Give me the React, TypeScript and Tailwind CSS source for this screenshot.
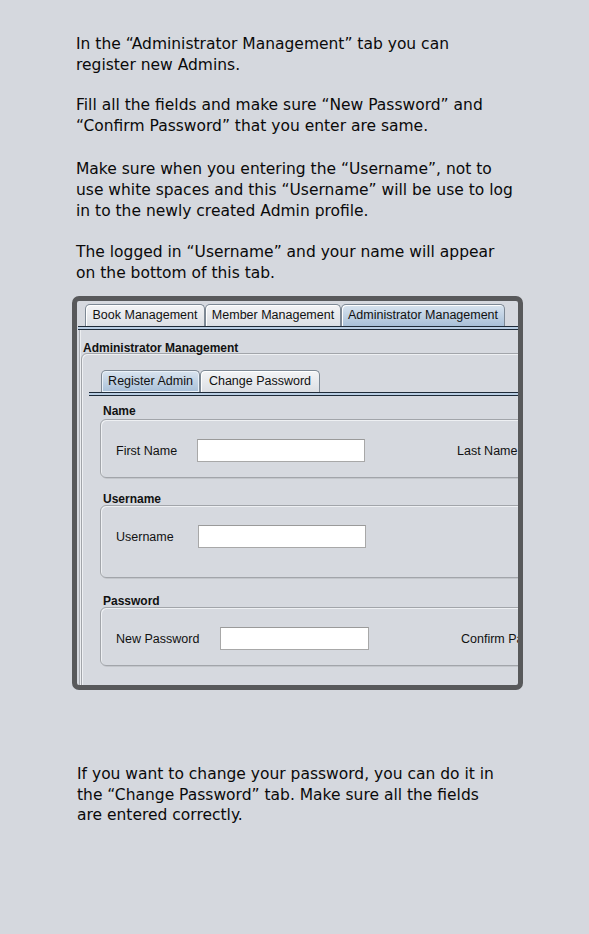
import React from "react";

const body = { fontFamily: '"DejaVu Sans", sans-serif' };
const ui = { fontFamily: '"Liberation Sans", Arial, sans-serif' };

function Tab({ label, selected, w }: { label: string; selected?: boolean; w: number }) {
  return (
    <div
      style={{ width: w }}
      className={
        "h-[22px] flex items-center justify-center border border-b-0 border-[#7d8894] rounded-t-[5px] text-[12.5px] text-[#111] whitespace-nowrap shadow-[inset_1px_1px_0_#ffffff] " +
        (selected
          ? "bg-gradient-to-b from-[#d9e4ef] to-[#a9c0d8]"
          : "bg-gradient-to-b from-[#f3f4f6] to-[#dcdfe4]")
      }
    >
      {label}
    </div>
  );
}

function TabLine() {
  return (
    <div className="flex flex-col">
      <div className="h-px bg-[#1e2a38]" />
      <div className="h-[2px] bg-[#b9cde2]" />
      <div className="h-px bg-[#1e2a38]" />
    </div>
  );
}

function Input({ w }: { w: number }) {
  return <div style={{ width: w }} className="h-[23px] bg-white border border-[#a8a8a8] border-t-[#9a9a9a]" />;
}

function Group({ h, children }: { h: number; children: React.ReactNode }) {
  return (
    <div
      style={{ height: h }}
      className="w-[560px] rounded-[6px] border border-[#a2a5aa] shadow-[inset_1px_1px_0_#eef0f3,1px_1px_0_#c3c6cb] flex items-start pt-[19px]"
    >
      {children}
    </div>
  );
}

export default function App() {
  return (
    <div className="w-[589px] min-h-[934px] bg-[#d5d8de] text-[#111] overflow-hidden">
      <div style={body} className="pt-[34px] pl-[76px] text-[15.5px] leading-[21px] whitespace-nowrap text-[#0a0a0a]">
        <p>
          In the “Administrator Management” tab you can
          <br />
          register new Admins.
        </p>
        <p className="mt-[19px]">
          Fill all the fields and make sure “New Password” and
          <br />
          “Confirm Password” that you enter are same.
        </p>
        <p className="mt-[22px]">
          Make sure when you entering the “Username”, not to
          <br />
          use white spaces and this “Username” will be use to log
          <br />
          in to the newly created Admin profile.
        </p>
        <p className="mt-[20px]">
          The logged in “Username” and your name will appear
          <br />
          on the bottom of this tab.
        </p>
      </div>

      <div
        style={ui}
        className="ml-[72px] mt-[12px] w-[451px] h-[394px] border-[5px] border-[#58595b] rounded-[7px] overflow-hidden bg-[#d6d9df]"
      >
        <div className="pt-[3px] pl-[8px] flex">
          <Tab label="Book Management" w={120} />
          <Tab label="Member Management" w={136} />
          <Tab label="Administrator Management" selected w={164} />
        </div>
        <div className="ml-[1px]">
          <TabLine />
        </div>
        <div className="ml-[2px] h-[400px] border-l border-[#a9acb2] shadow-[inset_1px_0_0_#eceef1]">
          <div className="pl-[3px] pt-[11px] text-[12px] font-bold leading-[14px]">Administrator Management</div>
          <div className="-mt-[2px] ml-[1px] w-[600px] h-[400px] rounded-[6px] border border-[#a2a5aa] shadow-[inset_1px_1px_0_#eef0f3]">
            <div className="pt-[16px] pl-[19px] flex">
              <div className="h-[22px] w-[99px] flex items-center justify-center border border-b-0 border-[#7d8894] rounded-t-[5px] text-[12.5px] whitespace-nowrap bg-gradient-to-b from-[#d9e4ef] to-[#a9c0d8] shadow-[inset_0_0_0_1px_#eaf1f8]">
                Register Admin
              </div>
              <Tab label="Change Password" w={120} />
            </div>
            <div className="ml-[7px]">
              <TabLine />
            </div>
            <div className="pl-[18px]">
              <div className="pl-[3px] pt-[8px] text-[12px] font-bold leading-[14px]">Name</div>
              <div className="mt-[1px]">
                <Group h={59}>
                  <div className="pl-[15px] w-[96px] text-[12.5px] leading-[24px]">First Name</div>
                  <Input w={168} />
                  <div className="ml-[92px] text-[12.5px] leading-[24px] whitespace-nowrap">Last Name</div>
                </Group>
              </div>
              <div className="pl-[3px] pt-[14px] text-[12px] font-bold leading-[14px]">Username</div>
              <div className="-mt-[1px]">
                <Group h={73}>
                  <div className="pl-[15px] w-[97px] text-[12.5px] leading-[24px]">Username</div>
                  <Input w={168} />
                </Group>
              </div>
              <div className="pl-[3px] pt-[16px] text-[12px] font-bold leading-[14px]">Password</div>
              <div className="-mt-[1px]">
                <Group h={59}>
                  <div className="pl-[15px] w-[119px] text-[12.5px] leading-[24px] whitespace-nowrap">New Password</div>
                  <Input w={149} />
                  <div className="ml-[92px] text-[12.5px] leading-[24px] whitespace-nowrap">Confirm Password</div>
                </Group>
              </div>
            </div>
          </div>
        </div>
      </div>

      <div style={body} className="pl-[77px] mt-[74px] text-[15.5px] leading-[20.5px] whitespace-nowrap text-[#0a0a0a]">
        If you want to change your password, you can do it in
        <br />
        the “Change Password” tab. Make sure all the fields
        <br />
        are entered correctly.
      </div>
    </div>
  );
}
